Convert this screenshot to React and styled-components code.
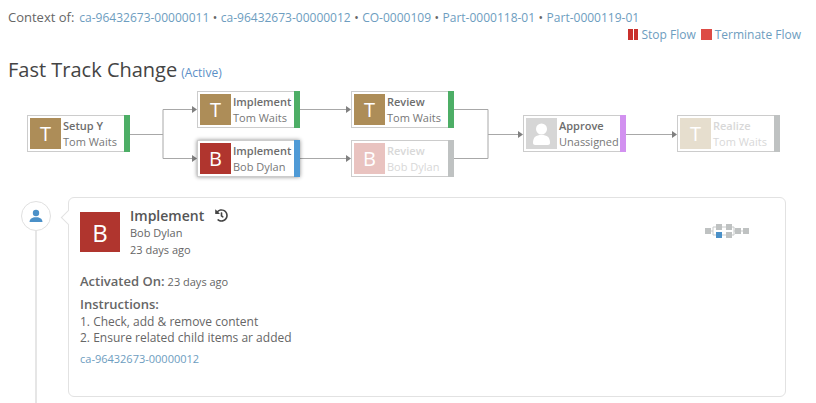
import React from "react";
import styled, { createGlobalStyle } from "styled-components";
import { FaHistory } from "react-icons/fa";

const GlobalStyle = createGlobalStyle`
  html, body { margin: 0; padding: 0; background: #fff; }
  body { font-family: "Open Sans", "Liberation Sans", sans-serif; font-size: 12px; color: #555; overflow: hidden; }
`;

const Page = styled.div`
  width: 816px;
  height: 403px;
  overflow: hidden;
  padding: 8px 8px 0;
  box-sizing: border-box;
`;

const ContextRow = styled.div`
  display: flex;
  align-items: center;
  height: 18px;
  color: #666;
  white-space: nowrap;
`;

const ContextLabel = styled.span`
  font-size: 13px;
  margin-right: 5px;
`;

const Link = styled.a`
  color: #6d9dc0;
  text-decoration: none;
`;

const Dot = styled.span`
  margin: 0 3.5px;
  color: #666;
`;

const Actions = styled.div`
  display: flex;
  justify-content: flex-end;
  align-items: center;
  gap: 5px;
  height: 16px;
  padding-right: 7px;
`;

const ActionLink = styled(Link)`
  display: flex;
  align-items: center;
  gap: 3px;
`;

const StopIcon = styled.span`
  display: flex;
  gap: 1px;
  i {
    display: block;
    width: 5px;
    height: 11px;
    background: #c9302c;
  }
  i + i {
    width: 4px;
  }
`;

const TermIcon = styled.span`
  display: block;
  width: 11px;
  height: 11px;
  background: #dd4b45;
`;

const Title = styled.h1`
  margin: 14px 0 0;
  height: 29px;
  line-height: 28px;
  font-size: 20px;
  font-weight: 400;
  color: #444;
`;

const Status = styled.small`
  font-size: 12px;
  color: #5b8fc7;
  margin-left: 4px;
`;

const Diagram = styled.div`
  position: relative;
  height: 86px;
  margin: 6px 0 0 -8px;
`;

const Wires = styled.svg`
  position: absolute;
  left: 0;
  top: 0;
`;

const Node = styled.div`
  position: absolute;
  box-sizing: border-box;
  width: 103px;
  height: 37px;
  display: flex;
  align-items: stretch;
  background: #fff;
  border: 1px solid #ccc;
  box-shadow: ${(p) => (p.$current ? "0 0 4px rgba(0,0,0,.45)" : "none")};
`;

const Avatar = styled.div`
  width: 31px;
  height: 31px;
  margin: 2px;
  flex: none;
  display: flex;
  align-items: center;
  justify-content: center;
  color: #fff;
  font-size: 20px;
  background: ${(p) => p.$bg};
`;

const NodeText = styled.div`
  flex: 1;
  min-width: 0;
  font-size: 11px;
  line-height: 16px;
  margin: 2px 0 0 0;
  white-space: nowrap;
  color: ${(p) => (p.$faded ? "#d8d8d8" : "#6d6d6d")};
  b {
    display: block;
    font-weight: 600;
  }
  span {
    display: block;
    color: ${(p) => (p.$faded ? "#d8d8d8" : "#777")};
  }
`;

const NodeBar = styled.div`
  position: absolute;
  right: -1px;
  top: -1px;
  bottom: -1px;
  width: 6px;
  background: ${(p) => p.$color};
`;

const Timeline = styled.div`
  display: flex;
  margin: 20px 0 0 13px;
`;

const Rail = styled.div`
  position: relative;
  width: 47px;
  flex: none;
  &::after {
    content: "";
    position: absolute;
    left: 14px;
    top: 34px;
    width: 2px;
    height: 180px;
    background: #e6e6e6;
  }
`;

const RailBadge = styled.div`
  box-sizing: border-box;
  width: 30px;
  height: 30px;
  margin-top: 4px;
  border: 1px solid #e0e0e0;
  border-radius: 50%;
  display: flex;
  align-items: center;
  justify-content: center;
`;

const Card = styled.div`
  position: relative;
  box-sizing: border-box;
  width: 718px;
  height: 200px;
  padding: 14px 11px;
  background: #fff;
  border: 1px solid #e2e2e2;
  border-radius: 6px;
  &::before {
    content: "";
    position: absolute;
    left: -6px;
    top: 14px;
    width: 10px;
    height: 10px;
    background: #fff;
    border-left: 1px solid #e2e2e2;
    border-bottom: 1px solid #e2e2e2;
    transform: rotate(45deg);
  }
`;

const CardHead = styled.div`
  display: flex;
  gap: 10px;
`;

const CardAvatar = styled.div`
  width: 40px;
  height: 40px;
  flex: none;
  background: #b0352e;
  color: #fff;
  font-size: 24px;
  display: flex;
  align-items: center;
  justify-content: center;
`;

const HeadText = styled.div`
  margin-top: -5px;
`;

const CardTitle = styled.div`
  display: flex;
  align-items: center;
  gap: 11px;
  font-size: 14px;
  font-weight: 600;
  line-height: 17px;
  color: #555;
`;

const Meta = styled.div`
  font-size: 11px;
  line-height: 17px;
  color: #666;
`;

const Activated = styled.div`
  margin-top: 14px;
  line-height: 18px;
  color: #666;
  b {
    font-size: 13px;
    font-weight: 600;
  }
  span {
    font-size: 11px;
  }
`;

const Instructions = styled.div`
  margin-top: 4px;
  font-size: 12px;
  line-height: 16px;
  color: #666;
  b {
    display: block;
    font-size: 13px;
    font-weight: 600;
    line-height: 19px;
  }
`;

const CardLink = styled(Link)`
  display: block;
  margin-top: 5px;
  font-size: 11px;
  line-height: 16px;
`;

const Mini = styled.svg`
  position: absolute;
  left: 636px;
  top: 26px;
`;

const nodes = [
  { x: 27, y: 24, letter: "T", bg: "#ad8d58", name: "Setup Y", who: "Tom Waits", bar: "#4dae66" },
  { x: 197, y: 0, letter: "T", bg: "#ad8d58", name: "Implement", who: "Tom Waits", bar: "#4dae66" },
  { x: 197, y: 49, letter: "B", bg: "#b0352e", name: "Implement", who: "Bob Dylan", bar: "#4f9ad6", current: true },
  { x: 351, y: 0, letter: "T", bg: "#ad8d58", name: "Review", who: "Tom Waits", bar: "#4dae66" },
  { x: 351, y: 49, letter: "B", bg: "#e9c3c0", name: "Review", who: "Bob Dylan", bar: "#bfc2c2", faded: true },
  { x: 523, y: 24, bg: "#d6d6d6", name: "Approve", who: "Unassigned", bar: "#d291f0", person: true },
  { x: 677, y: 24, letter: "T", bg: "#e6dece", name: "Realize", who: "Tom Waits", bar: "#bfc2c2", faded: true },
];

const wires = [
  "M130 43H163M163 18V67M163 18H193M163 67H193",
  "M300 18H347M300 67H347",
  "M454 18H488M454 67H488M488 18V67M488 43H519",
  "M626 43H673",
];

const arrows = [
  [197, 18],
  [197, 67],
  [351, 18],
  [351, 67],
  [523, 43],
  [677, 43],
];

const minis = [
  [0, 4], [11, 0], [21, 0], [11, 8, true], [21, 8], [30, 4], [38, 4],
];

const App = () => {
  return (
    <Page>
      <GlobalStyle />
      <ContextRow>
        <ContextLabel>Context of:</ContextLabel>
        <Link>ca-96432673-00000011</Link>
        <Dot>•</Dot>
        <Link>ca-96432673-00000012</Link>
        <Dot>•</Dot>
        <Link>CO-0000109</Link>
        <Dot>•</Dot>
        <Link>Part-0000118-01</Link>
        <Dot>•</Dot>
        <Link>Part-0000119-01</Link>
      </ContextRow>
      <Actions>
        <ActionLink>
          <StopIcon>
            <i />
            <i />
          </StopIcon>
          Stop Flow
        </ActionLink>
        <ActionLink>
          <TermIcon />
          Terminate Flow
        </ActionLink>
      </Actions>
      <Title>
        Fast Track Change
        <Status>(Active)</Status>
      </Title>
      <Diagram>
        <Wires width="816" height="90">
          <path d={wires.join("")} fill="none" stroke="#a8a8a8" strokeWidth="1" transform="translate(0 .5)" />
          {arrows.map(([x, y]) => (
            <path key={`${x}-${y}`} d={`M${x - 5} ${y - 3}L${x} ${y + 0.5}L${x - 5} ${y + 4}Z`} fill="#808080" />
          ))}
        </Wires>
        {nodes.map((n) => (
          <Node key={`${n.x}-${n.y}`} $current={n.current} style={{ left: n.x, top: n.y }}>
            <Avatar $bg={n.bg}>
              {n.person ? (
                <svg width="19" height="22" viewBox="0 0 19 22">
                  <circle cx="9.5" cy="6" r="5.500" fill="#fff" />
                  <path d="M1 20c0-6 3-8 8.500-8s8.500 2 8.500 8c0 1-1 2-2 2H3c-1 0-2-1-2-2z" fill="#fff" />
                </svg>
              ) : (
                n.letter
              )}
            </Avatar>
            <NodeText $faded={n.faded}>
              <b>{n.name}</b>
              <span>{n.who}</span>
            </NodeText>
            <NodeBar $color={n.bar} />
          </Node>
        ))}
      </Diagram>
      <Timeline>
        <Rail>
          <RailBadge>
            <svg width="14" height="14" viewBox="0 0 14 14">
              <circle cx="7" cy="4" r="3.200" fill="#4a90c8" />
              <path d="M0.500 13c0-3 2-4 4.500-4.800h4c2.500.8 4.500 1.800 4.500 4.800z" fill="#4a90c8" />
            </svg>
          </RailBadge>
        </Rail>
        <Card>
          <CardHead>
            <CardAvatar>B</CardAvatar>
            <HeadText>
              <CardTitle>
                Implement
                <FaHistory size={13} color="#444" />
              </CardTitle>
              <Meta>Bob Dylan</Meta>
              <Meta>23 days ago</Meta>
            </HeadText>
          </CardHead>
          <Activated>
            <b>Activated On:</b> <span>23 days ago</span>
          </Activated>
          <Instructions>
            <b>Instructions:</b>
            1. Check, add &amp; remove content
            <br />
            2. Ensure related child items ar added
          </Instructions>
          <CardLink>ca-96432673-00000012</CardLink>
          <Mini width="44" height="14" viewBox="0 0 44 14">
            <path d="M6 7H8M8 3V11M8 3H11M8 11H11M17 3H21M17 11H21M27 3H29M27 11H29M29 3V11M29 7H30M36 7H38" fill="none" stroke="#c6c9c9" />
            {minis.map(([x, y, on]) => (
              <rect key={`${x}-${y}`} x={x} y={y} width="6" height="6" fill={on ? "#4a90c8" : "#bfc2c2"} />
            ))}
          </Mini>
        </Card>
      </Timeline>
    </Page>
  );
};

export default App;
